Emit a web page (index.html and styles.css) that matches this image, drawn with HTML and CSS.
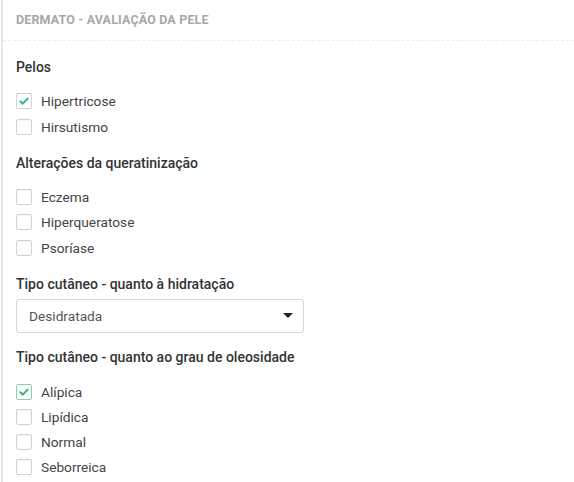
FILE: index.html
```html
<!DOCTYPE html>
<html lang="pt">
<head>
<meta charset="utf-8">
<link rel="stylesheet" href="styles.css">
</head>
<body>
<div class="panel">
  <div class="panel-head">DERMATO - AVALIAÇÃO DA PELE</div>
  <div class="panel-body">
    <div class="group">
      <div class="label">Pelos</div>
      <div class="checks">
        <label class="check"><span class="box"><svg viewBox="0 0 16 16" width="14" height="14"><path d="M3.8 8.4 L6.6 11 L12 5.4" fill="none" stroke="#3cb878" stroke-width="2.4" stroke-linecap="round" stroke-linejoin="round"/></svg></span>Hipertricose</label>
        <label class="check"><span class="box"></span>Hirsutismo</label>
      </div>
    </div>
    <div class="group">
      <div class="label">Alterações da queratinização</div>
      <div class="checks">
        <label class="check"><span class="box"></span>Eczema</label>
        <label class="check"><span class="box"></span>Hiperqueratose</label>
        <label class="check"><span class="box"></span>Psoríase</label>
      </div>
    </div>
    <div class="group">
      <div class="label">Tipo cutâneo - quanto à hidratação</div>
      <div class="select">
        <span>Desidratada</span>
        <span class="caret"></span>
      </div>
    </div>
    <div class="group group-after-select">
      <div class="label">Tipo cutâneo - quanto ao grau de oleosidade</div>
      <div class="checks checks-loose">
        <label class="check"><span class="box box-focus"><svg viewBox="0 0 16 16" width="14" height="14"><path d="M3.8 8.4 L6.6 11 L12 5.4" fill="none" stroke="#3cb878" stroke-width="2.4" stroke-linecap="round" stroke-linejoin="round"/></svg></span>Alípica</label>
        <label class="check"><span class="box"></span>Lipídica</label>
        <label class="check"><span class="box"></span>Normal</label>
        <label class="check"><span class="box"></span>Seborreica</label>
      </div>
    </div>
  </div>
</div>
</body>
</html>
```
FILE: styles.css
```css
html, body {
  margin: 0;
  padding: 0;
  background: #fff;
}
body {
  font-family: Roboto, "Liberation Sans", sans-serif;
  color: #333;
  font-size: 13.7px;
}
.panel {
  margin-left: 1px;
  border-left: 2px solid #e6e6e6;
  height: 482px;
  overflow: hidden;
}
.panel-head {
  height: 40px;
  line-height: 39px;
  padding-left: 13px;
  font-size: 12.5px;
  font-weight: 700;
  color: #a8a8a8;
  letter-spacing: 0.15px;
  border-bottom: 1px dashed #ececec;
}
.panel-body {
  padding: 17px 0 0 13px;
  display: flex;
  flex-direction: column;
  gap: 18px;
}
.group-after-select {
  margin-top: -3px;
}
.label {
  font-weight: 500;
  font-size: 14px;
  line-height: 18px;
  color: #333;
  margin-bottom: 6px;
}
.checks {
  display: flex;
  flex-direction: column;
  gap: 7.5px;
  padding-top: 10px;
}
.checks-loose {
  padding-top: 11px;
  gap: 7px;
}
.check {
  display: flex;
  align-items: center;
  height: 18px;
  color: #444;
}
.box {
  width: 14px;
  height: 14px;
  border: 1px solid #d2d2d2;
  border-radius: 2px;
  margin-right: 9px;
  display: flex;
  align-items: center;
  justify-content: center;
  background: #fff;
  box-shadow: inset 0 1px 1px rgba(0,0,0,0.04);
}
.box-focus {
  border-color: #8fcfa8;
}
.box svg {
  display: block;
}
.select {
  width: 264px;
  height: 32px;
  border: 1px solid #d6d6d6;
  border-radius: 3px;
  display: flex;
  align-items: center;
  justify-content: space-between;
  padding: 0 10px 0 12px;
  color: #555;
}
.caret {
  width: 0;
  height: 0;
  border-left: 5px solid transparent;
  border-right: 5px solid transparent;
  border-top: 5px solid #222;
}
```
